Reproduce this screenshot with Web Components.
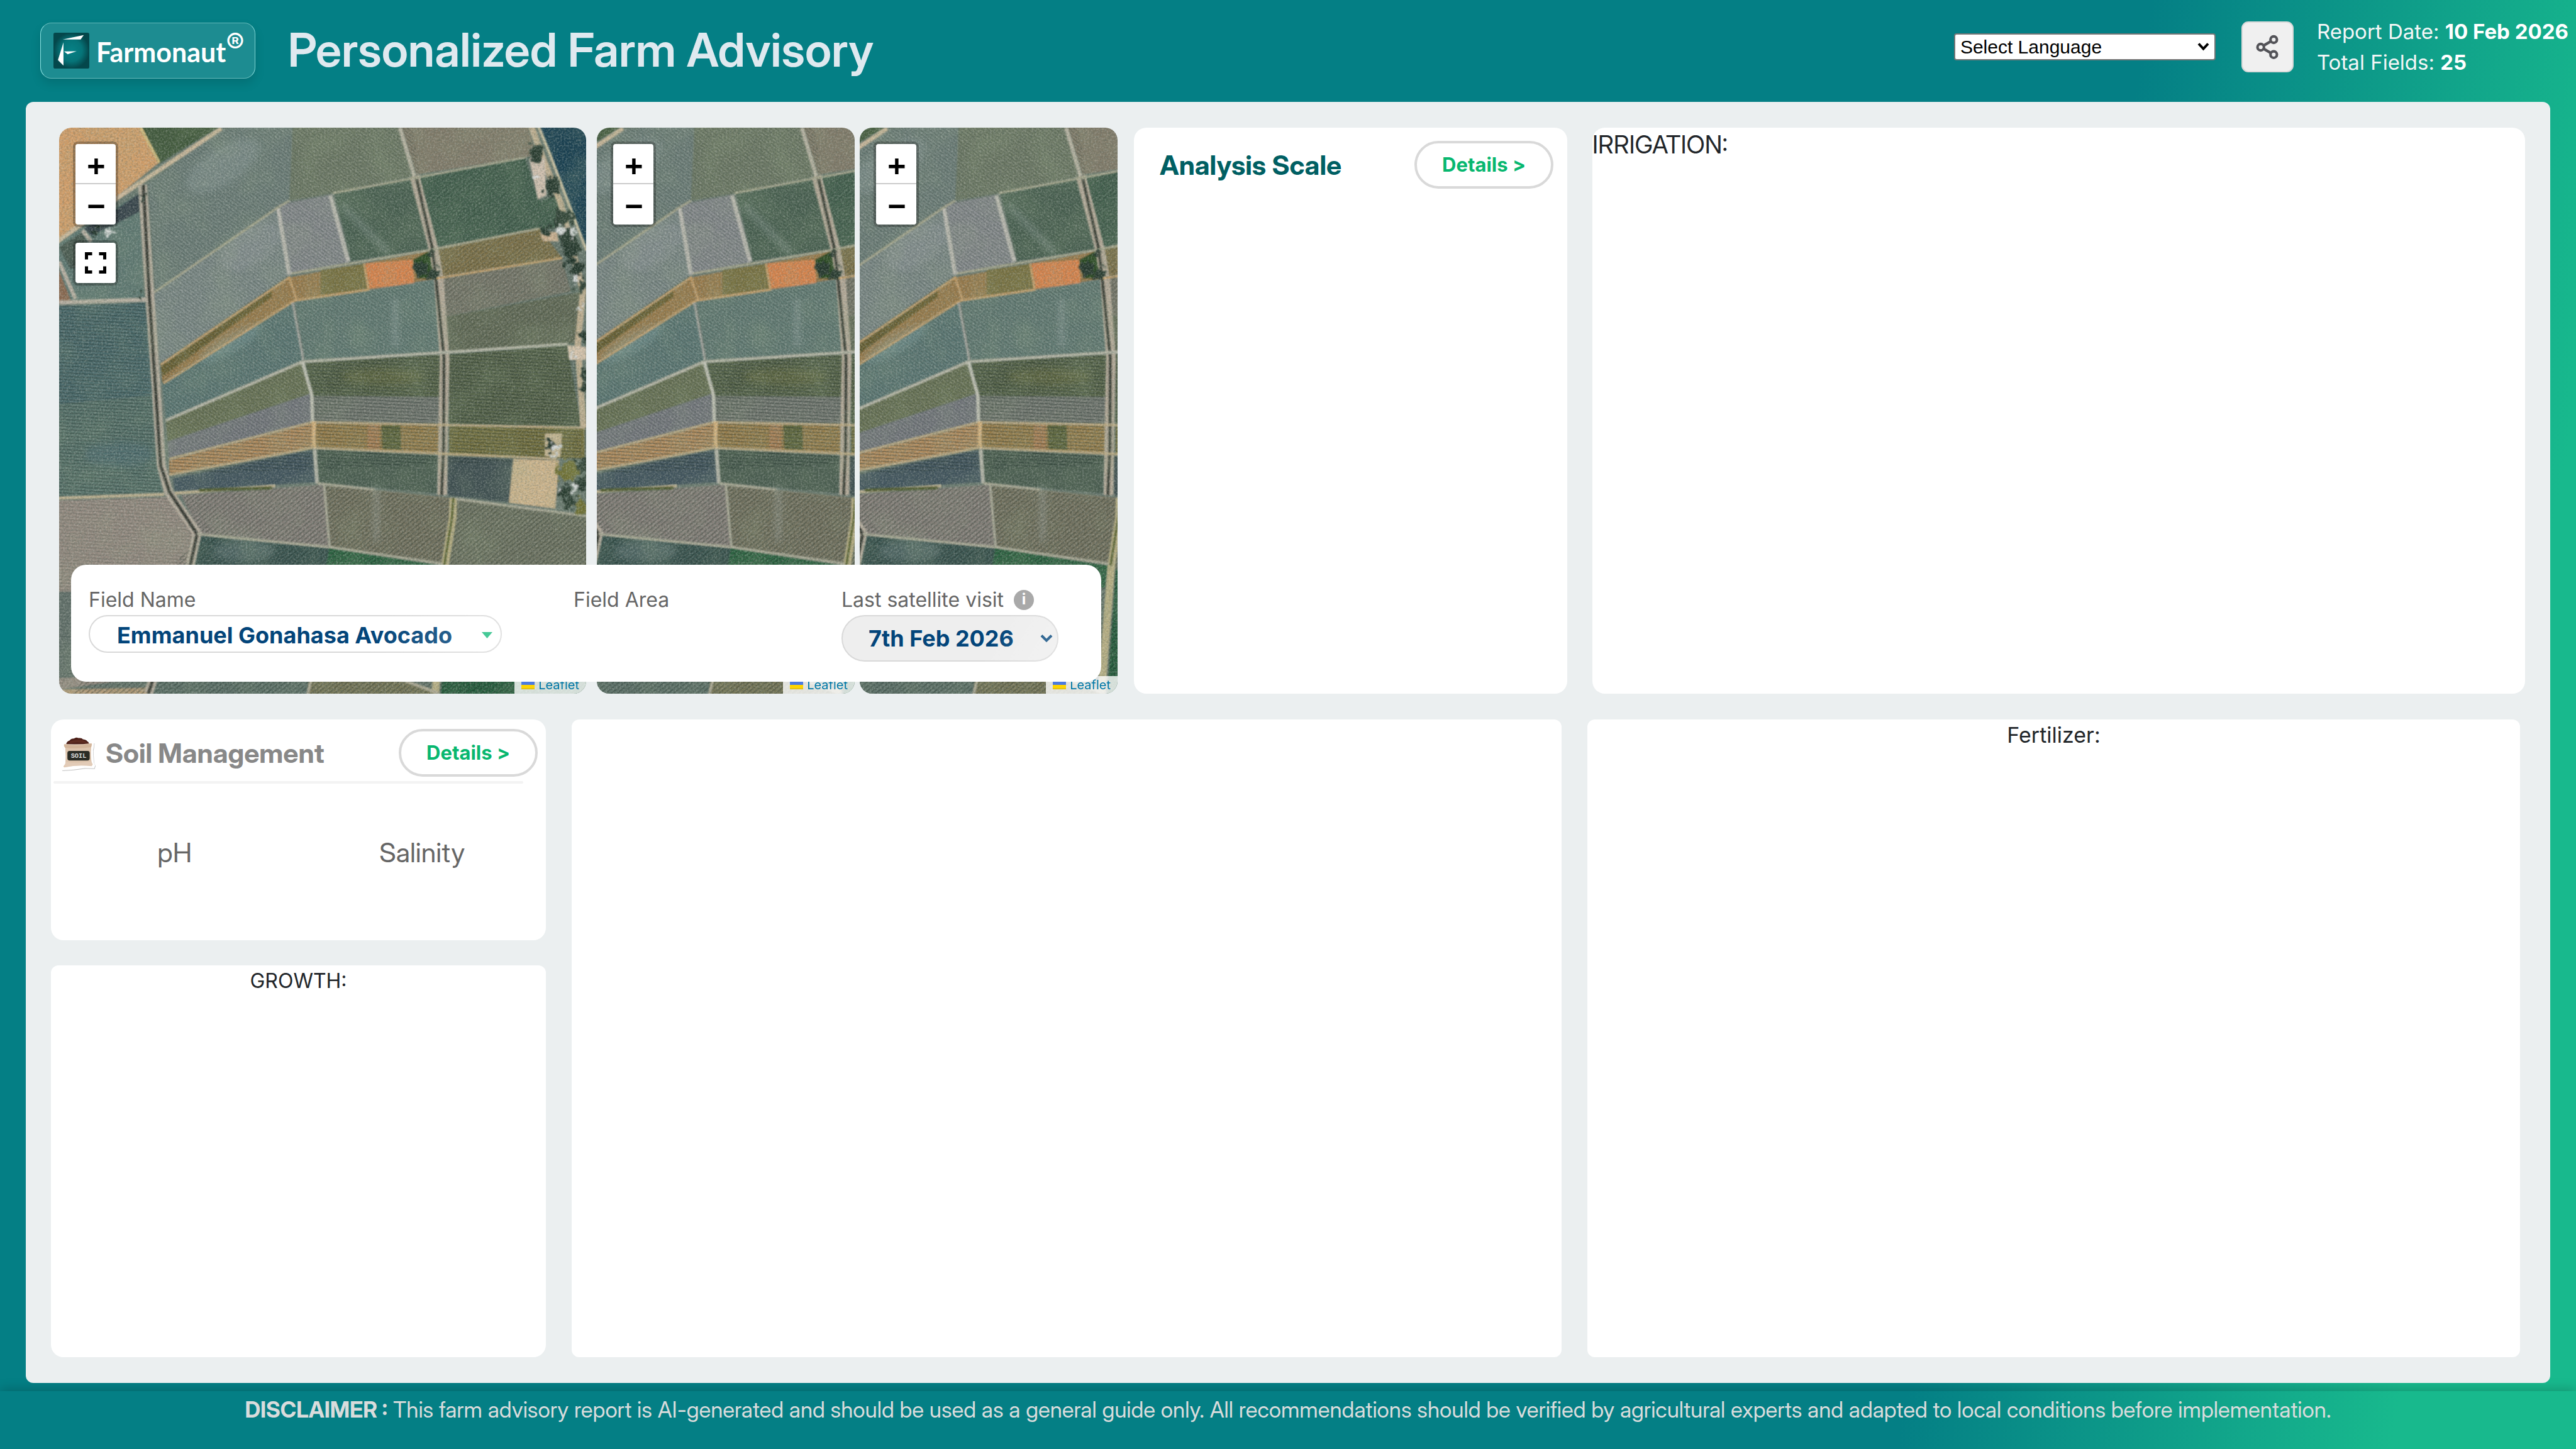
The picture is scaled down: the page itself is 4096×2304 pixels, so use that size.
<!DOCTYPE html>
<html lang="en">
<head>
<meta charset="utf-8">
<title>Personalized Farm Advisory</title>
<style>
html, body { margin: 0; }
body { font-family: Inter, "Liberation Sans", sans-serif; --display: "Inter Display", Inter, sans-serif; }
</style>
</head>
<body>
<farm-report></farm-report>
<script>
const define = (name, html) => customElements.define(name, class extends HTMLElement {
  constructor() {
    super();
    const t = document.createElement('template');
    t.innerHTML = typeof html === 'function' ? html(this) : html;
    this.attachShadow({ mode: 'open' }).append(t.content.cloneNode(true));
  }
});

/* Aerial picture of the fields, one drawing shared by all three maps */
const P = (fill, pts) => `<polygon fill="${fill}" points="${pts}"/>`;
const aerial = (box) => `
<svg class="aerial" viewBox="${box}" preserveAspectRatio="none" aria-hidden="true">
<defs>
<filter id="grain" x="0" y="0" width="100%" height="100%"><feTurbulence type="fractalNoise" baseFrequency="0.16 0.22" numOctaves="3" seed="4"/><feColorMatrix values="0 0 0 0 0.1  0 0 0 0 0.14  0 0 0 0 0.12  1.6 0 0 0 -0.62"/></filter>
<filter id="grain2" x="0" y="0" width="100%" height="100%"><feTurbulence type="fractalNoise" baseFrequency="0.2" numOctaves="3" seed="11"/><feColorMatrix values="0 0 0 0 0.85  0 0 0 0 0.85  0 0 0 0 0.78  0 1.5 0 0 -0.62"/></filter>
<filter id="patch" x="0" y="0" width="100%" height="100%"><feTurbulence type="fractalNoise" baseFrequency="0.011" numOctaves="3" seed="7"/><feColorMatrix values="0 0 0 0 0.32  0 0 0 0 0.42  0 0 0 0 0.25  0 2 0 0 -0.8"/></filter>
<filter id="soft"><feGaussianBlur stdDeviation="1.5"/></filter>
<filter id="ragged"><feTurbulence type="fractalNoise" baseFrequency="0.06" numOctaves="2" seed="3"/><feDisplacementMap in="SourceGraphic" scale="46" xChannelSelector="R" yChannelSelector="G"/><feGaussianBlur stdDeviation="1.5"/></filter>
<filter id="haze"><feGaussianBlur stdDeviation="9"/></filter>
<pattern id="h1" width="12" height="9" patternUnits="userSpaceOnUse" patternTransform="rotate(3)"><rect width="12" height="3" fill="#0c1f1c" opacity=".3"/></pattern>
<pattern id="h2" width="12" height="10" patternUnits="userSpaceOnUse" patternTransform="rotate(-38)"><rect width="12" height="4" fill="#17241e" opacity=".28"/></pattern>
<pattern id="h3" width="12" height="8" patternUnits="userSpaceOnUse" patternTransform="rotate(35)"><rect width="12" height="3" fill="#17241e" opacity=".18"/></pattern>
</defs>
<g filter="url(#soft)">
<rect x="0" y="0" width="1600" height="1600" fill="#66766d"/>
${P('#d19d68','20,10 262,10 315,112 200,200 20,325')}
${P('#3f583b','262,10 500,10 316,115')}
${P('#5b7670','20,330 258,195 272,480 20,492')}
${P('#34424a','190,240 258,195 260,245 120,310 100,290')}
${P('#42524c','28,340 95,300 135,380 60,400')}
${P('#8a6750','20,385 64,490 20,492')}
${P('#48686a','20,500 275,490 300,740 20,765')}
${P('#56716a','20,765 300,740 330,1002 20,1015')}
${P('#948a80','20,1025 345,1015 422,1115 405,1200 290,1500 20,1535')}
${P('#6e7f7a','285,170 490,24 700,10 690,215 660,225 305,460')}
${P('#6e7a66','700,10 1005,10 1045,150 815,195 690,215')}
${P('#7f7967','1010,10 1375,10 1400,90 1370,98 1055,145')}
${P('#7d8a88','655,235 690,415 318,655 300,465')}
${P('#868a8d','662,225 805,200 860,382 695,412')}
${P('#4b6453','820,195 1045,155 1095,345 868,378')}
${P('#425e4d','1065,150 1370,100 1410,215 1460,200 1480,285 1112,340')}
${P('#7d7046','1105,345 1410,290 1475,370 1120,420')}
${P('#967848','320,660 692,422 905,385 1095,350 1112,425 920,455 705,485 325,705')}
${P('#6b6030','320,660 640,455 640,475 325,690')}
${P('#77703f','780,402 905,385 915,455 780,470')}
${P('#d5824c','908,385 1045,374 1050,440 920,452')}
${P('#2c4a22','1045,375 1095,350 1112,425 1062,425')}
${P('#5b7875','325,710 700,490 730,645 335,805')}
${P('#647b75','706,487 1110,428 1130,622 735,645')}
${P('#767669','1120,425 1475,375 1500,460 1130,530')}
${P('#626b56','1130,530 1540,460 1520,600 1140,625')}
${P('#697355','335,810 725,650 755,735 340,865')}
${P('#74787e','340,865 755,735 757,812 345,910')}
${P('#556247','735,650 1130,630 1135,745 755,742')}
${P('#72776f','755,742 1135,745 1135,815 762,812')}
${P('#536147','1148,630 1490,605 1530,825 1150,818')}
${P('#b08a5b','345,915 757,815 757,882 345,955')}
${P('#977c4a','765,815 1135,820 1135,898 765,882')}
${P('#ab8154','915,818 950,818 950,888 915,886')}
${P('#5a6035','955,820 1010,820 1012,888 958,886')}
${P('#726e3e','1150,822 1540,828 1540,912 1150,902')}
${P('#40525b','355,965 757,887 770,975 360,1000')}
${P('#495c4f','765,887 1118,902 1115,1005 770,978')}
${P('#3d4e4f','1145,905 1332,912 1322,1030 1145,1010')}
${P('#cdb48c','1335,912 1466,915 1455,1046 1322,1030')}
${P('#857f79','380,1010 790,982 805,1150 432,1115')}
${P('#757360','792,982 1165,1018 1130,1195 808,1150')}
${P('#707463','1172,1020 1560,1068 1560,1600 1140,1200')}
${P('#38534f','430,1118 805,1152 800,1240 405,1220')}
${P('#2a643f','805,1152 1130,1200 1120,1260 790,1240')}
${P('#205b3b','1150,1210 1560,1240 1560,1560 1125,1560')}
${P('#5c7067','300,1440 750,1440 745,1600 280,1600')}
${P('#767456','750,1440 1120,1540 1120,1600 740,1600')}
${P('#62706a','20,1270 110,1270 110,1500 20,1505')}
${P('#b39a77','20,1535 285,1530 275,1600 20,1600')}
${P('#163c4f','1405,10 1560,10 1560,400 1502,240')}
</g>
<g>
<polygon fill="url(#h1)" points="20,500 275,490 330,1002 20,1015"/>
<polygon fill="url(#h1)" points="735,650 1530,605 1530,912 345,955 345,915 757,812"/>
<polygon fill="url(#h1)" points="20,1025 345,1015 422,1115 405,1200 20,1535" opacity=".45"/>
<polygon fill="url(#h3)" points="285,170 490,24 1045,18 1095,345 695,412 325,705 300,465"/>
<polygon fill="url(#h3)" points="325,710 700,490 1130,428 1130,622 757,812 345,910"/>
<polygon fill="url(#h2)" points="380,1010 790,982 1544,1065 1560,1600 20,1600 430,1115"/>
<polygon fill="url(#h2)" points="1065,150 1370,100 1470,210 1540,600 1140,625" opacity=".6"/>
</g>
<g filter="url(#haze)" opacity=".3">
<ellipse cx="500" cy="120" rx="120" ry="50" fill="#9aa9aa" transform="rotate(-30 500 120)"/><ellipse cx="580" cy="340" rx="100" ry="50" fill="#9a9fa5" transform="rotate(-30 580 340)"/>
<ellipse cx="520" cy="600" rx="100" ry="26" fill="#8fb0b0" transform="rotate(-28 520 600)"/>
<path d="M840 225 975 355M995 480v130M940 985v150" stroke="#b8c2c4" stroke-width="16" fill="none"/>
<ellipse cx="200" cy="900" rx="100" ry="34" fill="#4a6d80"/><ellipse cx="960" cy="690" rx="120" ry="22" fill="#7b7a3c"/>
<ellipse cx="560" cy="1160" rx="90" ry="30" fill="#8b9c9f"/>
</g>
<g fill="none" stroke-linejoin="round" filter="url(#soft)">
<path d="M20 328 200 205 495 20" stroke="#cbb79a" stroke-width="12"/>
<path d="M262 18 316 112" stroke="#d2bd7e" stroke-width="8"/>
<path d="M268 172 290 480 322 930 342 1000 425 1112 405 1200 285 1545" stroke="#b5ac9d" stroke-width="26"/>
<path d="M270 172 288 480 320 930 345 1000 425 1115 405 1200 285 1545" stroke="#31352e" stroke-width="10"/>
<path d="M28 490 280 482M28 380 75 480M95 295 120 325" stroke="#b9b0a3" stroke-width="11"/>
<path d="M20 1018 330 1008M360 1005 650 985" stroke="#bdaf8e" stroke-width="8"/>
<path d="M430 997 640 990" stroke="#4b572c" stroke-width="8"/>
<path d="M1008 18 1050 150" stroke="#b8b3a3" stroke-width="11"/>
<path d="M1050 148 1105 345 1120 425 1137 640 1132 880 1130 1010" stroke="#b4a998" stroke-width="28"/>
<path d="M1055 150 1102 345 1112 425 1135 640 1134 880 1128 1010" stroke="#353a30" stroke-width="9"/>
<path d="M1162 1018 1160 1070 1138 1200 1110 1545" stroke="#b7ae83" stroke-width="22"/>
<path d="M1162 1018 1158 1070 1136 1200" stroke="#55602c" stroke-width="7"/>
<path d="M658 235 690 415M808 200 860 380" stroke="#bab8b0" stroke-width="12"/>
<path d="M302 462 655 235 690 215M815 195 1370 98M695 412 1095 348 1410 290" stroke="#a6a58d" stroke-width="6"/>
<path d="M320 658 690 422M328 708 705 485 920 455M1112 425 1475 370M905 385 918 455M690 420 712 485" stroke="#c39f6c" stroke-width="6"/>
<path d="M700 490 730 645" stroke="#a9a8a2" stroke-width="6"/>
<path d="M335 808 728 650 1130 625 1490 602" stroke="#b3b3a4" stroke-width="8"/>
<path d="M728 650 755 740 757 812" stroke="#c0c0b4" stroke-width="10"/>
<path d="M345 912 757 813 1540 828M345 955 757 882 1130 898 1460 912" stroke="#bda982" stroke-width="6"/>
<path d="M761 812 761 882" stroke="#d6b17c" stroke-width="12"/>
<path d="M763 885 770 978" stroke="#b3b3a8" stroke-width="11"/>
<path d="M790 980 806 1150M770 978 935 995M425 1115 805 1150 1130 1195M1170 1020 1560 1068" stroke="#a9a794" stroke-width="7"/>
<path d="M755 1500 740 1560M990 1500 1120 1545" stroke="#b0ab96" stroke-width="8"/>
<path d="M1385 10 1415 90 1470 220 1535 460 1520 600 1536 828" stroke="#c0ae90" stroke-width="18"/>
<path d="M1405 10 1440 90 1545 350" stroke="#c9bfa0" stroke-width="8"/>
</g>
<g filter="url(#soft)">
${P('#cfbfae','1380,100 1425,100 1430,200 1405,212')}${P('#cdb090','1410,300 1460,300 1465,325 1420,325')}
${P('#d6c3ac','1490,605 1544,610 1544,645 1495,645')}${P('#c4b390','1425,843 1475,843 1470,908 1425,905')}
</g>
<g filter="url(#ragged)">
<g fill="#24352c"><circle cx="1400" cy="85" r="22"/><circle cx="1445" cy="175" r="24"/><circle cx="1480" cy="260" r="24"/><circle cx="1425" cy="295" r="14"/><circle cx="1500" cy="340" r="28"/><circle cx="1485" cy="310" r="20"/><circle cx="1520" cy="400" r="20"/><circle cx="1495" cy="380" r="14"/><circle cx="1530" cy="450" r="14"/><circle cx="1540" cy="580" r="14"/><circle cx="1538" cy="680" r="16"/><circle cx="1540" cy="720" r="12"/><circle cx="1445" cy="880" r="16"/><circle cx="1530" cy="930" r="18"/><circle cx="1530" cy="980" r="20"/><circle cx="1480" cy="1000" r="18"/><circle cx="1500" cy="1030" r="20"/><circle cx="1068" cy="400" r="20"/><circle cx="1100" cy="355" r="12"/><circle cx="1108" cy="415" r="14"/><circle cx="270" cy="210" r="10"/><circle cx="258" cy="472" r="9"/><circle cx="130" cy="300" r="16"/></g>
<g fill="#6d6d2f"><circle cx="1490" cy="945" r="28"/><circle cx="1530" cy="1040" r="18"/></g>
<g fill="#d9dcdc"><circle cx="1400" cy="150" r="9"/><circle cx="1470" cy="295" r="11"/><circle cx="1508" cy="300" r="10"/><circle cx="1518" cy="425" r="10"/><circle cx="1505" cy="635" r="9"/><circle cx="1455" cy="885" r="12"/><circle cx="1470" cy="993" r="9"/><circle cx="1510" cy="985" r="9"/><circle cx="172" cy="300" r="12"/><circle cx="1534" cy="505" r="8"/></g>
</g>
<rect x="0" y="0" width="1600" height="1600" filter="url(#patch)" opacity=".2"/>
<rect x="0" y="0" width="1600" height="1600" filter="url(#grain)" opacity=".5"/>
<rect x="0" y="0" width="1600" height="1600" filter="url(#grain2)" opacity=".4"/>
</svg>`;

define('farm-logo', `
<style>
:host { display: block; }
a { display: flex; align-items: center; gap: 11px; box-sizing: border-box; height: 89px; padding: 0 16px 0 20px; border-radius: 18px;
  text-decoration: none; color: #fff; font: 700 43px/48px Lato, sans-serif; border: 1px solid #62b8b8; border-left-color: #8be0e0; border-right-color: #7fd4d3;
  background: rgba(255,255,255,.1); box-shadow: 0 8px 16px rgba(0,0,0,.12); }
svg { width: 57px; height: 57px; }
b { font-weight: 700; padding-top: 4px; }
sup { align-self: flex-start; font: 500 44px/48px Inter, sans-serif; padding-top: 7px; margin-left: -11px; }
</style>
<a href="#" aria-label="Farmonaut"><svg viewBox="0 0 240 240"><defs><radialGradient id="g"><stop offset="0" stop-color="#078186"/><stop offset=".6" stop-color="#067478"/><stop offset="1" stop-color="#04474b"/></radialGradient></defs>
<rect width="240" height="240" rx="12" fill="url(#g)"/><path fill="#fff" d="M62 45 203 16 182 45ZM67 64V220L30 183ZM71 125 155 124 95 144Z"/></svg><b>Farmonaut</b><sup>®</sup></a>`);

define('language-picker', `
<style>
:host { display: block; position: relative; width: 416px; }
select { appearance: none; display: block; width: 100%; height: 43px; box-sizing: border-box; border: 2px solid #767676; border-radius: 4px; background: #fff; color: #000; padding: 0 8px; font: 30px/36px "Liberation Sans", Arial, sans-serif; }
svg { position: absolute; right: 10px; top: 14px; width: 19px; height: 14px; pointer-events: none; }
</style>
<select aria-label="Select Language"><option>Select Language</option></select>
<svg viewBox="0 0 19 14"><path d="M2 2.500l7.500 8 7.500-8" fill="none" stroke="#000" stroke-width="4"/></svg>`);

define('report-header', `
<style>
:host { display: flex; align-items: flex-start; height: 162px; box-sizing: border-box; padding: 34px 12px 0 64px; }
farm-logo { padding-top: 2px; }
h1 { margin: 0 auto 0 52px; font-family: var(--display); font-size: 74px; line-height: 90px; font-weight: 600; color: #dfe9ef; white-space: nowrap; }
language-picker { margin: 19px 41px 0 0; }
button { width: 83px; height: 81px; padding: 0; border: 2px solid #d9d9d9; border-radius: 11px; background: #f0f0f0; margin-right: 37px; display: grid; place-items: center; }
button svg { width: 36px; height: 40px; }
.meta { color: #f3f6f6; font-size: 33px; line-height: 49px; white-space: nowrap; margin-top: -8px; }
.meta b { color: #fff; font-weight: 700; }
</style>
<farm-logo></farm-logo>
<h1>Personalized Farm Advisory</h1>
<language-picker></language-picker>
<button aria-label="Share"><svg viewBox="0 0 150 164" fill="none" stroke="#535358" stroke-width="17"><path d="M50 72 98 44M50 92 98 120" stroke-width="18"/><circle cx="118" cy="32" r="21.500"/><circle cx="32" cy="82" r="21.500"/><circle cx="118" cy="131" r="21.500"/></svg></button>
<div class="meta"><div>Report Date: <b>10 Feb 2026</b></div><div>Total Fields: <b>25</b></div></div>`);

define('map-view', el => `
<style>
:host { display: block; position: relative; overflow: hidden; border-radius: 20px; min-width: 0; }
.aerial { position: absolute; inset: 0; width: 100%; height: 100%; }
.tools { position: absolute; left: 22px; top: 22px; display: grid; gap: 21px; }
.bar { border: 4px solid rgba(0,0,0,.25); border-radius: 8px; background-clip: padding-box; }
button { display: grid; place-items: center; width: 64px; height: 64px; border: 0; padding: 0; background: #fff; color: #000; font: 700 47px/64px "DejaVu Sans Mono", monospace; }
.bar button:first-child { border-radius: 4px 4px 0 0; }
.bar button:last-child { border-radius: 0 0 4px 4px; }
.bar button:only-child { border-radius: 4px; }
.zoom button:first-child { border-bottom: 2px solid #ccc; }
.zoom button { text-indent: 2px; padding-top: 2px; }
button svg { width: 34px; height: 34px; }
a { position: absolute; right: 0; bottom: 0; display: flex; align-items: center; gap: 6px; padding: 0 11px; height: 28px; background: rgba(255,255,255,.8); color: #0078a8; font-size: 20px; line-height: 30px; text-decoration: none; }
a svg { width: 21px; height: 14px; }
</style>
${aerial(el.getAttribute('view'))}
<div class="tools"><div class="bar zoom"><button aria-label="Zoom in">+</button><button aria-label="Zoom out">−</button></div>
${el.hasAttribute('fullscreen') ? `<div class="bar"><button aria-label="Full screen"><svg viewBox="0 0 34 34" fill="none" stroke="#000" stroke-width="5"><path d="M2.500 11.500v-9h9M22.500 2.500h9v9M31.500 22.500v9h-9M11.500 31.500h-9v-9"/></svg></button></div>` : ''}</div>
<a href="#"><svg viewBox="0 0 12 8"><path fill="#4c7be1" d="M0 0h12v4H0z"/><path fill="#ffd500" d="M0 4h12v3H0z"/><path fill="#e0bc00" d="M0 7h12v1H0z"/></svg>Leaflet</a>`);

define('field-bar', `
<style>
:host { display: grid; grid-template-columns: 771fr 426fr 413fr; align-items: start; box-sizing: border-box; height: 186px; padding: 32px 0 0 28px; background: #fff; border-radius: 24px; }
.item { display: grid; justify-items: start; }
label, .label { display: flex; align-items: center; gap: 16px; color: #666; font-size: 32px; line-height: 48px; white-space: nowrap; }
i { width: 32px; height: 32px; border-radius: 50%; background: #a9a9a9; color: #fff; font: 700 24px/30px Inter, sans-serif; text-align: center; }
.pick { position: relative; border-radius: 40px; }
.pick::after { content: ""; position: absolute; inset: 0; pointer-events: none; border-radius: 40px; background: linear-gradient(120deg, transparent 68%, rgba(255,255,255,.25)); }
select { appearance: none; display: block; box-sizing: border-box; border: 2px solid #d9d9d9; border-radius: 40px; color: #03457a; background: #fff; font: 700 36px/44px Inter, sans-serif; }
#name { width: 657px; height: 60px; padding: 5px 40px 0 43px; }
#date { width: 345px; height: 74px; padding: 0 50px 0 41px; background: #eee; }
svg { position: absolute; }
.tri { right: 15px; top: 27px; width: 17px; height: 10px; }
.chev { right: 9px; top: 30px; width: 20px; height: 14px; }
</style>
<div class="item"><label for="name">Field Name</label><div class="pick"><select id="name"><option>Emmanuel Gonahasa Avocado</option></select><svg class="tri" viewBox="0 0 17 10"><path d="M0 0h17L8.500 10z" fill="#16bb7c"/></svg></div></div>
<div class="item"><span class="label">Field Area</span></div>
<div class="item"><label for="date">Last satellite visit <i>i</i></label><div class="pick"><select id="date"><option>7th Feb 2026</option></select><svg class="chev" viewBox="0 0 20 14"><path d="M2 2.500l8 8 8-8" fill="none" stroke="#0b4b7f" stroke-width="4"/></svg></div></div>`);

define('map-group', `
<style>
:host { display: flex; gap: 17px; position: relative; min-width: 0; }
map-view { flex: 1; }
.wide { flex: 838 1 0; }
.pair { flex: 828 1 0; display: flex; gap: 8px; }
field-bar { position: absolute; left: 19px; right: 26px; bottom: 19px; }
</style>
<map-view class="wide" view="28 18 1516 1527" fullscreen></map-view>
<div class="pair"><map-view view="420 18 740 1527"></map-view><map-view view="416 18 740 1527"></map-view></div>
<field-bar></field-bar>`);

define('details-button', `
<style>
:host { display: block; }
button { display: block; width: 221px; height: 76px; padding: 0; border: 4px solid #d9d9d9; border-radius: 38px; background: #fff; color: #07b76f; font: 700 31px/60px Inter, sans-serif; }
</style>
<button>Details &gt;</button>`);

define('report-card', `
<style>
:host { display: block; background: #fff; border-radius: 12px; min-width: 0; box-sizing: border-box; color: #212529; font-size: 34px; line-height: 50px; }
:host([large]) { border-radius: 20px; }
:host([deep]) { border-radius: 12px 12px 20px 20px; font-size: 32px; }
:host([center]) { text-align: center; }
</style>
<slot></slot>`);

define('analysis-head', `
<style>
:host { display: flex; justify-content: space-between; align-items: center; padding: 21px 22px 0 41px; }
h2 { margin: 0; font-family: var(--display); font-size: 43px; line-height: 50px; font-weight: 700; color: #005f63; }
</style>
<h2>Analysis Scale</h2><details-button></details-button>`);

define('soil-panel', `
<style>
:host { display: block; }
header { display: flex; align-items: center; padding: 15px 13px 7px 15px; }
header svg { width: 56px; height: 64px; }
h2 { margin: 0 auto 0 16px; font-family: var(--display); font-size: 43px; line-height: 50px; font-weight: 700; color: #888; }
hr { border: 0; margin: 0 36px 0 4px; height: 4px; border-radius: 2px; background: #f3f3f3; }
div { display: grid; grid-template-columns: 1fr 1fr; text-align: center; padding-top: 83px; color: #666; font-family: var(--display); font-size: 43px; line-height: 52px; }
</style>
<header><svg viewBox="8 55 245 265" role="img" aria-label="Soil bag">
<path d="M22 150 15 128 40 110 62 84 110 68 165 72 205 95 222 112 243 118 240 148 235 170 240 255 250 275 244 296 180 294 100 305 20 310 14 296 28 276 32 165Z" fill="#aaa" transform="translate(3 4)" opacity=".7"/>
<path d="M22 150 15 128 40 110 62 84 110 68 165 72 205 95 222 112 243 118 240 148 235 170 240 255 250 275 244 296 180 294 100 305 20 310 14 296 28 276 32 165Z" fill="#fff"/>
<path d="M48 128q4-20 25-27 8-13 30-13 14-12 30-3 25-3 32 8 26 3 29 14 15 8 13 22Z" fill="#4d2019"/><path d="M75 108q40-18 90-8 20 6 30 22-70-14-125 0Z" fill="#6d3527" opacity=".6"/>
<path d="M36 126q90 8 188-5l4 8-6 22q-4 60 3 100l8 18-8 12q-90-14-190 8l-6-6 14-20q4-50-1-108l-10-14Z" fill="#dec5ae"/><path d="M32 130q100 14 194-6l-4 24q-100 16-180 4Z" fill="#cfae92" opacity=".7"/><path d="M44 250q90 18 180-4l8 24-8 9q-90-10-190 9Z" fill="#e6d2bf" opacity=".5"/>
<rect x="57" y="174" width="155" height="67" rx="15" fill="#2b2d26"/><text x="135" y="221" text-anchor="middle" font-family="Liberation Mono, monospace" font-weight="700" font-size="45" fill="#ddd">SOIL</text></svg>
<h2>Soil Management</h2><details-button></details-button></header><hr>
<div><span>pH</span><span>Salinity</span></div>`);

define('farm-report', `
<style>
:host { display: flex; flex-direction: column; min-height: 100vh; background: linear-gradient(100deg, #047f85 76%, #18b98d 93.5%); }
main { flex: 1; display: grid; grid-template-rows: 900fr 1015fr; gap: 41px; margin: 0 41px; padding: 41px 40px; background: #ebeff0; border-radius: 12px; position: relative; z-index: 1; }
.top { display: grid; grid-template-columns: 2398fr 1483fr; gap: 40px; padding-left: 13px; }
.left { display: grid; grid-template-columns: 1683fr 689fr; gap: 26px; }
.bottom { display: grid; grid-template-columns: 787fr 1574fr 1483fr; gap: 41px; padding-right: 8px; }
.stack { display: grid; grid-template-rows: 352fr 623fr; gap: 40px; }
.irrigation { font-family: var(--display); font-size: 39px; line-height: 54px; }
footer { height: 92px; box-sizing: border-box; margin-top: 13px; padding: 4px 0; text-align: center; color: #d9dcdc; font-family: var(--display); font-size: 35px; line-height: 50px; box-shadow: 0 -4px 16px rgba(0,0,0,.18); }
footer b { font-weight: 700; }
</style>
<report-header></report-header>
<main>
<section class="top"><div class="left"><map-group></map-group><report-card large><analysis-head></analysis-head></report-card></div><report-card large class="irrigation">IRRIGATION:</report-card></section>
<section class="bottom"><div class="stack"><report-card large><soil-panel></soil-panel></report-card><report-card deep center>GROWTH:</report-card></div><report-card></report-card><report-card center>Fertilizer:</report-card></section>
</main>
<footer><b>DISCLAIMER :</b> This farm advisory report is AI-generated and should be used as a general guide only. All recommendations should be verified by agricultural experts and adapted to local conditions before implementation.</footer>`);
</script>
</body>
</html>
